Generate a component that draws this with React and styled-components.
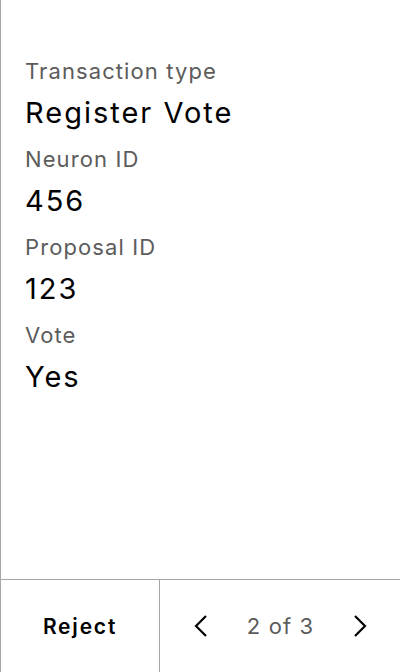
import React from 'react';
import styled, { createGlobalStyle } from 'styled-components';

const GlobalStyle = createGlobalStyle`
  html, body {
    margin: 0;
    padding: 0;
    background: #fff;
  }
  body {
    font-family: Inter, "Noto Sans", sans-serif;
  }
`

const Screen = styled.div`
  width: 400px;
  height: 672px;
  box-sizing: border-box;
  border-left: 1px solid #a6a6a6;
  display: flex;
  flex-direction: column;
  color: #000;
`

const Content = styled.div`
  flex: 1;
  padding: 59px 24px 0 24px;
  display: flex;
  flex-direction: column;
`

const Field = styled.div`
  display: flex;
  flex-direction: column;
  gap: 12px;
  margin-bottom: 16px;
`

const Label = styled.div`
  font-size: 22px;
  line-height: 24px;
  letter-spacing: 1.1px;
  color: #5c5c5c;
`

const Value = styled.div`
  font-size: 29px;
  line-height: 36px;
  letter-spacing: 2px;
  color: #000;
`

const Footer = styled.div`
  height: 92px;
  border-top: 1px solid #a6a6a6;
  display: grid;
  grid-template-columns: 159px 1fr;
`

const RejectButton = styled.div`
  display: flex;
  align-items: center;
  justify-content: center;
  font-size: 21px;
  font-weight: 600;
  letter-spacing: 1.8px;
  border-right: 1px solid #a6a6a6;
`

const Pager = styled.div`
  display: flex;
  align-items: center;
  justify-content: space-between;
  padding: 0 31px 0 32px;
`

const PageText = styled.div`
  font-size: 22px;
  letter-spacing: 1.1px;
  color: #5c5c5c;
`

const Chevron = ({ dir }) => (
  <svg width="16" height="24" viewBox="0 0 16 24" fill="none">
    <path
      d={dir === 'left' ? 'M14 2 L4 12 L14 22' : 'M2 2 L12 12 L2 22'}
      stroke="#000"
      strokeWidth="2.2"
    />
  </svg>
)

const fields = [
  ['Transaction type', 'Register Vote'],
  ['Neuron ID', '456'],
  ['Proposal ID', '123'],
  ['Vote', 'Yes'],
]

const App = () => (
  <>
    <GlobalStyle />
    <Screen>
      <Content>
        {fields.map(([label, value]) => (
          <Field key={label}>
            <Label>{label}</Label>
            <Value>{value}</Value>
          </Field>
        ))}
      </Content>
      <Footer>
        <RejectButton>Reject</RejectButton>
        <Pager>
          <Chevron dir="left" />
          <PageText>2 of 3</PageText>
          <Chevron dir="right" />
        </Pager>
      </Footer>
    </Screen>
  </>
)

export default App;
